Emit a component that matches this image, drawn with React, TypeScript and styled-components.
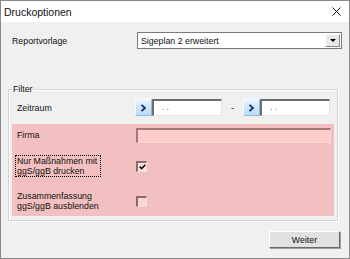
import React from "react";
import styled, { createGlobalStyle } from "styled-components";

const GlobalStyle = createGlobalStyle`
  html, body {
    margin: 0;
    padding: 0;
    background: #f0f0f0;
  }
  * {
    box-sizing: border-box;
  }
`;

const Window = styled.div`
  width: 350px;
  height: 259px;
  border: 1px solid #8a8a8a;
  background: #f0f0f0;
  font-family: "Liberation Sans", Arial, sans-serif;
  font-size: 8.8px;
  color: #111;
  display: flex;
  flex-direction: column;
`;

const TitleBar = styled.div`
  height: 21px;
  background: #fff;
  display: flex;
  align-items: center;
  justify-content: space-between;
  padding: 0 8px 0 3px;
`;

const Title = styled.span`
  font-size: 10.5px;
`;

const CloseIcon = styled.svg`
  width: 9px;
  height: 9px;
`;

const Body = styled.div`
  flex: 1;
  display: flex;
  flex-direction: column;
  padding: 10px 0 0 7px;
`;

const TopRow = styled.div`
  display: flex;
  align-items: center;
  height: 17px;
  padding-left: 4px;
`;

const Label = styled.span<{ $width?: number }>`
  width: ${(p) => (p.$width ? `${p.$width}px` : "auto")};
  flex-shrink: 0;
`;

const Select = styled.div`
  width: 205px;
  height: 17px;
  border: 1px solid #7a7a7a;
  background: #fff;
  display: flex;
  align-items: center;
  padding-left: 3px;
`;

const SelectText = styled.span`
  flex: 1;
`;

const DropButton = styled.div`
  width: 15px;
  height: 13px;
  margin-right: 1px;
  background: #e8e8e8;
  border: 1px solid;
  border-color: #fff #8a8a8a #8a8a8a #fff;
  display: flex;
  align-items: center;
  justify-content: center;
`;

const Arrow = styled.div`
  width: 0;
  height: 0;
  border-left: 3px solid transparent;
  border-right: 3px solid transparent;
  border-top: 3px solid #000;
`;

const GroupBox = styled.div`
  position: relative;
  margin-top: 40px;
  width: 330px;
  height: 132px;
  border: 1px solid #d5d5d5;
  box-shadow: inset 1px 1px 0 #fff, 1px 1px 0 #fff;
  padding: 9px 3px 0 3px;
`;

const Legend = styled.span`
  position: absolute;
  top: -6px;
  left: 3px;
  padding: 0 1px;
  background: #f0f0f0;
  line-height: 11px;
`;

const DateRow = styled.div`
  display: flex;
  align-items: center;
  height: 17px;
  padding-left: 5px;
`;

const DateField = styled.div<{ $width: number }>`
  display: flex;
  height: 17px;
  width: ${(p) => p.$width + 17}px;
`;

const DateButton = styled.div`
  width: 17px;
  height: 17px;
  background: linear-gradient(#e6f3fd, #b6dbf8);
  border: 1px solid;
  border-color: #f4faff #9cb6cc #9cb6cc #f4faff;
  display: flex;
  align-items: center;
  justify-content: center;
`;

const DateInput = styled.div`
  flex: 1;
  background: #fff;
  border-top: 2px solid #6d6d6d;
  border-left: 2px solid #6d6d6d;
  border-right: 1px solid #e3e3e3;
  border-bottom: 1px solid #e3e3e3;
  padding-left: 8px;
  color: #707070;
  line-height: 12px;
  letter-spacing: 2px;
`;

const Dash = styled.span`
  width: 21px;
  text-align: center;
`;

const PinkArea = styled.div`
  margin-top: 8px;
  height: 92px;
  background: #f2c0c0;
  display: grid;
  grid-template-columns: 121px 1fr;
  grid-template-rows: 15px 22px 24px;
  row-gap: 12px;
  align-items: center;
  padding: 4px 3px 3px 3px;
`;

const FieldLabel = styled.div<{ $focused?: boolean }>`
  border: 1px ${(p) => (p.$focused ? "dotted #000" : "solid transparent")};
  padding: 0 3px 0 1px;
  line-height: 10.5px;
  justify-self: start;
  height: ${(p) => (p.$focused ? "22px" : "auto")};
  display: flex;
  align-items: center;
`;

const PinkInput = styled.div`
  width: 195px;
  height: 15px;
  background: #ffcccc;
  border-top: 2px solid #a07878;
  border-left: 2px solid #a07878;
  border-right: 1px solid #f8dada;
  border-bottom: 1px solid #f8dada;
`;

const Check = styled.div<{ $checked?: boolean }>`
  width: 11px;
  height: 11px;
  border-top: 2px solid #8a6a6a;
  border-left: 2px solid #8a6a6a;
  border-right: 1px solid #f8dcdc;
  border-bottom: 1px solid #f8dcdc;
  background: ${(p) => (p.$checked ? "#fbe6e6" : "#f8d6d6")};
  display: flex;
  align-items: center;
  justify-content: center;
`;

const Footer = styled.div`
  display: flex;
  justify-content: flex-end;
  padding: 10px 9px 0 0;
`;

const Button = styled.div`
  width: 71px;
  height: 17px;
  background: #e1e1e1;
  border: 1px solid;
  border-color: #fff #6a6a6a #6a6a6a #fff;
  box-shadow: 1px 1px 0 #a0a0a0;
  display: flex;
  align-items: center;
  justify-content: center;
`;

function Chevron() {
  return (
    <svg width="7" height="8" viewBox="0 0 7 8">
      <path d="M1.5 0.8 L5 4 L1.5 7.2" fill="none" stroke="#1d2a6b" strokeWidth="1.8" />
    </svg>
  );
}

function DatePicker({ width }: { width: number }) {
  return (
    <DateField $width={width}>
      <DateButton>
        <Chevron />
      </DateButton>
      <DateInput>..</DateInput>
    </DateField>
  );
}

export default function App() {
  return (
    <>
      <GlobalStyle />
      <Window>
        <TitleBar>
          <Title>Druckoptionen</Title>
          <CloseIcon viewBox="0 0 9 9">
            <path d="M0.5 0.5 L8.5 8.5 M8.5 0.5 L0.5 8.5" stroke="#111" strokeWidth="1" />
          </CloseIcon>
        </TitleBar>
        <Body>
          <TopRow>
            <Label $width={125}>Reportvorlage</Label>
            <Select>
              <SelectText>Sigeplan 2 erweitert</SelectText>
              <DropButton>
                <Arrow />
              </DropButton>
            </Select>
          </TopRow>
          <GroupBox>
            <Legend>Filter</Legend>
            <DateRow>
              <Label $width={118}>Zeitraum</Label>
              <DatePicker width={70} />
              <Dash>-</Dash>
              <DatePicker width={70} />
            </DateRow>
            <PinkArea>
              <FieldLabel>Firma</FieldLabel>
              <PinkInput />
              <FieldLabel $focused>
                Nur Maßnahmen mit
                <br />
                ggS/ggB drucken
              </FieldLabel>
              <Check $checked>
                <svg width="7" height="6" viewBox="0 0 7 6">
                  <path d="M0.6 2.6 L2.6 4.6 L6.4 0.8" fill="none" stroke="#000" strokeWidth="1.5" />
                </svg>
              </Check>
              <FieldLabel>
                Zusammenfassung
                <br />
                ggS/ggB ausblenden
              </FieldLabel>
              <Check />
            </PinkArea>
          </GroupBox>
          <Footer>
            <Button>Weiter</Button>
          </Footer>
        </Body>
      </Window>
    </>
  );
}
